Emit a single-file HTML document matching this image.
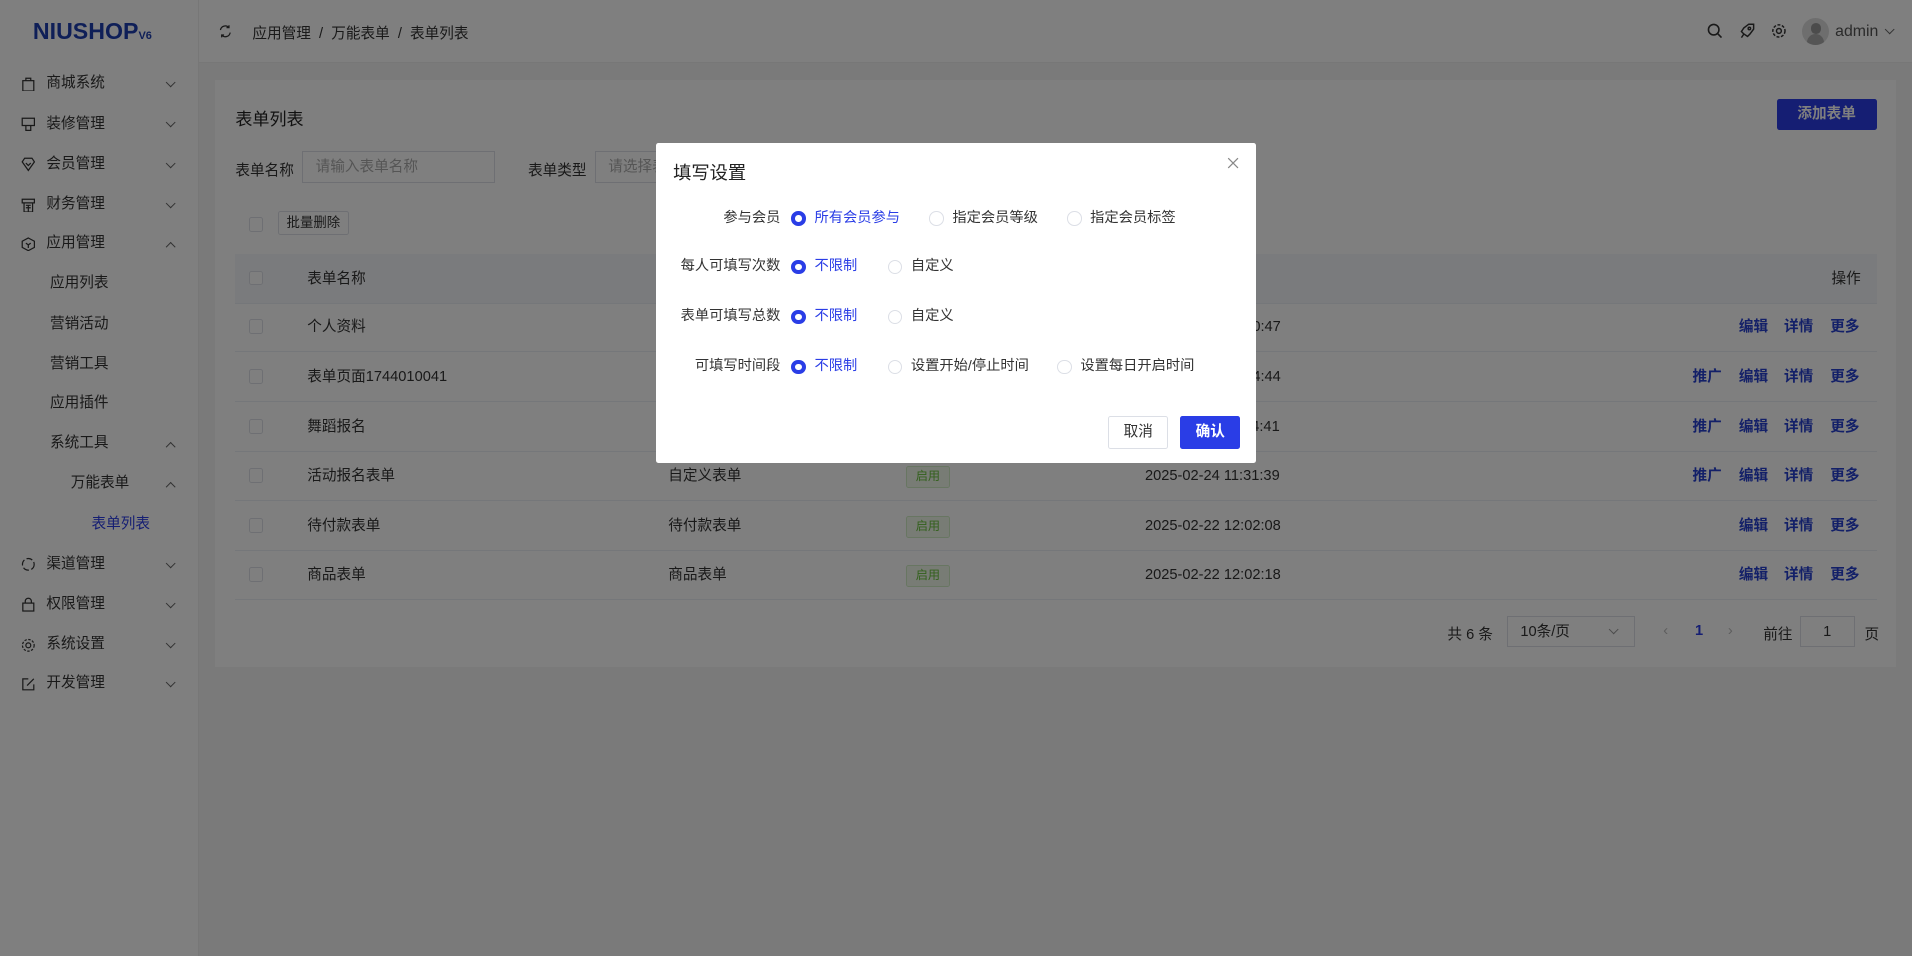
<!DOCTYPE html>
<html><head><meta charset="utf-8">
<style>
html{zoom:1.21939}
*{box-sizing:border-box;margin:0;padding:0}
i{font-style:normal}
body{width:1568px;height:784px;overflow:hidden;position:relative;background:#f5f5f5;font-family:"Liberation Sans","Noto Sans CJK SC",sans-serif;font-size:12px;color:#333}
.abs{position:absolute}
.side{left:0;top:0;width:163px;height:784px;background:#fff;border-right:1px solid #eee}
.logo{left:27px;top:15px;font-weight:bold;font-size:19px;color:#1e3fb0;letter-spacing:0px}
.logo small{font-size:9px}
.mi{position:absolute;left:0;width:163px;height:33px;line-height:33px;font-size:12px;color:#333}
.mi .t{position:absolute;left:38px}
.mi svg.ic{position:absolute;left:17px;top:11px}
.mi .ch{position:absolute;left:137px;top:13px;width:6px;height:6px;border-right:1px solid #666;border-bottom:1px solid #666;transform:rotate(45deg)}
.mi .ch.up{transform:rotate(225deg);top:16px}
.head{left:163px;top:0;width:1405px;height:52px;background:#fff;border-bottom:1px solid #eee}
.card{left:176px;top:66px;width:1379px;height:481px;background:#fff}
.ipt{border:1px solid #dcdfe6;height:26px;line-height:26px;padding-left:10px;color:#aaa;background:#fff}
.cb{width:12px;height:12px;border:1px solid #dcdfe6;background:#fff;border-radius:2px}
.row{position:absolute;left:193px;width:1346px;height:41px;border-bottom:1px solid #ebeef5;line-height:41px}
.row span{position:absolute}
.tag{position:absolute;left:550px;top:12px;width:36px;height:18px;line-height:16px;font-size:10px;text-align:center;border:1px solid #d1edc4;background:#f0f9eb;color:#67c23a;border-radius:2px}
.op{color:#2740d0;font-weight:bold}
.mask{left:0;top:0;width:1568px;height:784px;background:rgba(0,0,0,.5)}
.modal{left:538px;top:117px;width:492px;height:263px;background:#fff;border-radius:2px}
.lbl{position:absolute;width:102px;text-align:right;left:0}
.rd{position:absolute;width:12px;height:12px;border-radius:50%;border:1px solid #dcdfe6}
.rd.on{border:4px solid #2a3de6;background:#fff}
.mr{position:absolute;left:0;width:492px;height:16px;line-height:16px;font-size:11.7px}
.mr span{position:absolute}
.blue{color:#2a3de6}
</style></head><body>
<div class="abs side">
<div class="abs logo">NIUSHOP<small>V6</small></div>
<div class="mi" style="top:52px"><svg class="ic" width="12" height="12" viewBox="0 0 12 12" fill="none" stroke="#333"><rect x="1.5" y="3" width="9" height="8.5"/><path d="M4 3V1h4v2"/></svg><span class="t">商城系统</span><i class="ch"></i></div>
<div class="mi" style="top:85px"><svg class="ic" width="12" height="12" viewBox="0 0 12 12" fill="none" stroke="#333"><path d="M1 1h10v6H1zM4 7v4h4V7"/></svg><span class="t">装修管理</span><i class="ch"></i></div>
<div class="mi" style="top:118px"><svg class="ic" width="12" height="12" viewBox="0 0 12 12" fill="none" stroke="#333"><path d="M1 4l5 7 5-7-2-3H3z M4 5l2 2 2-2"/></svg><span class="t">会员管理</span><i class="ch"></i></div>
<div class="mi" style="top:151px"><svg class="ic" width="12" height="12" viewBox="0 0 12 12" fill="none" stroke="#333"><path d="M1 1h10v3H1zM2.5 4v7.5h7V4M4 6h4M4 8h4M6 6v5"/></svg><span class="t">财务管理</span><i class="ch"></i></div>
<div class="mi" style="top:183px"><svg class="ic" width="12" height="12" viewBox="0 0 12 12" fill="none" stroke="#333"><path d="M6 .8l5 2.7v5L6 11.2 1 8.5v-5zM4 5l2 1.5L8 5M6 6.5V9"/></svg><span class="t">应用管理</span><i class="ch up"></i></div>
<div class="mi" style="top:216px"><span class="t" style="left:41px">应用列表</span></div>
<div class="mi" style="top:249px"><span class="t" style="left:41px">营销活动</span></div>
<div class="mi" style="top:282px"><span class="t" style="left:41px">营销工具</span></div>
<div class="mi" style="top:314px"><span class="t" style="left:41px">应用插件</span></div>
<div class="mi" style="top:347px"><span class="t" style="left:41px">系统工具</span><i class="ch up"></i></div>
<div class="mi" style="top:380px"><span class="t" style="left:58px">万能表单</span><i class="ch up"></i></div>
<div class="mi" style="top:413px"><span class="t" style="left:75px;color:#2a3de6">表单列表</span></div>
<div class="mi" style="top:446px"><svg class="ic" width="12" height="12" viewBox="0 0 12 12" fill="none" stroke="#333"><circle cx="6" cy="6" r="4.8" stroke-dasharray="5 2"/></svg><span class="t">渠道管理</span><i class="ch"></i></div>
<div class="mi" style="top:479px"><svg class="ic" width="12" height="12" viewBox="0 0 12 12" fill="none" stroke="#333"><rect x="1.5" y="5" width="9" height="6.5"/><path d="M3.5 5V3.5a2.5 2.5 0 015 0V5"/></svg><span class="t">权限管理</span><i class="ch"></i></div>
<div class="mi" style="top:512px"><svg class="ic" width="12" height="12" viewBox="0 0 12 12" fill="none" stroke="#333"><circle cx="6" cy="6" r="2"/><circle cx="6" cy="6" r="4.8" stroke-dasharray="2 1.2"/></svg><span class="t">系统设置</span><i class="ch"></i></div>
<div class="mi" style="top:544px"><svg class="ic" width="12" height="12" viewBox="0 0 12 12" fill="none" stroke="#333"><path d="M6 1.5H1.5v9h9V6M5 7l5.5-5.5"/></svg><span class="t">开发管理</span><i class="ch"></i></div>
</div>
<div class="abs head">
<svg class="abs" style="left:16px;top:20px" width="12" height="12" viewBox="0 0 12 12" fill="none" stroke="#333"><path d="M2 5a4 4 0 017-2M10 7a4 4 0 01-7 2M9 1v2H7M3 11V9h2"/></svg>
<span class="abs" style="left:44px;top:18px">应用管理 &nbsp;/&nbsp; 万能表单 &nbsp;/&nbsp; 表单列表</span>
<svg class="abs" style="left:1237px;top:19px" width="13" height="13" viewBox="0 0 13 13" fill="none" stroke="#333" stroke-width="1.3"><circle cx="5.5" cy="5.5" r="4.3"/><path d="M8.7 8.7l3.2 3.2"/></svg>
<svg class="abs" style="left:1263px;top:19px" width="13" height="13" viewBox="0 0 13 13" fill="none" stroke="#333" stroke-width="1.2"><path d="M4 9l-2-2 2-3 4-3h4v4l-3 4-2 2zM4 9l-2 3"/><circle cx="8.5" cy="4.5" r="1"/></svg>
<svg class="abs" style="left:1289px;top:19px" width="13" height="13" viewBox="0 0 13 13" fill="none" stroke="#333" stroke-width="1.2"><circle cx="6.5" cy="6.5" r="2"/><circle cx="6.5" cy="6.5" r="5" stroke-dasharray="2.4 1.3"/></svg>
<div class="abs" style="left:1315px;top:15px;width:22px;height:22px;border-radius:50%;background:#ddd;overflow:hidden"><div class="abs" style="left:7px;top:4px;width:8px;height:9px;border-radius:4px;background:#999"></div><div class="abs" style="left:4px;top:13px;width:14px;height:9px;border-radius:7px 7px 0 0;background:#aaa"></div></div>
<span class="abs" style="left:1342px;top:19px;font-size:13px;color:#555">admin</span>
<i class="abs" style="left:1384px;top:21px;width:6px;height:6px;border-right:1px solid #666;border-bottom:1px solid #666;transform:rotate(45deg)"></i>
</div>
<div class="abs card">
<span class="abs" style="left:17px;top:20px;font-size:14px;color:#222">表单列表</span>
<div class="abs" style="left:1281px;top:15px;width:82px;height:26px;background:#2a3de6;color:#fff;text-align:center;line-height:26px;font-size:12px;font-weight:bold;border-radius:2px">添加表单</div>
<span class="abs" style="left:17px;top:64px">表单名称</span>
<div class="abs ipt" style="left:72px;top:58px;width:158px">请输入表单名称</div>
<span class="abs" style="left:257px;top:64px">表单类型</span>
<div class="abs ipt" style="left:312px;top:58px;width:160px">请选择表单类型</div>
<div class="abs cb" style="left:28px;top:112px"></div>
<div class="abs" style="left:52px;top:107px;width:58px;height:20px;border:1px solid #dcdfe6;font-size:11px;text-align:center;line-height:18px;border-radius:2px">批量删除</div>
</div>
<div class="row" style="top:208px;background:#f5f7fa;color:#333"><div class="abs cb" style="left:11px;top:14px"></div><span style="left:59px">表单名称</span><span style="left:355px">表单类型</span><span style="left:550px">状态</span><span style="left:746px">创建时间</span><span style="right:13px">操作</span></div>
<div class="row" style="top:248px"><div class="abs cb" style="left:11px;top:14px"></div><span style="left:59px">个人资料</span><span style="left:355px">个人资料</span><i class="tag">启用</i><span style="left:746px">2025-04-07 15:20:47</span><span style="left:1233px" class="op">编辑</span><span style="left:1270px" class="op">详情</span><span style="left:1308px" class="op">更多</span></div>
<div class="row" style="top:289px"><div class="abs cb" style="left:11px;top:14px"></div><span style="left:59px">表单页面1744010041</span><span style="left:355px">自定义表单</span><i class="tag">启用</i><span style="left:746px">2025-04-07 15:14:44</span><span style="left:1195px" class="op">推广</span><span style="left:1233px" class="op">编辑</span><span style="left:1270px" class="op">详情</span><span style="left:1308px" class="op">更多</span></div>
<div class="row" style="top:330px"><div class="abs cb" style="left:11px;top:14px"></div><span style="left:59px">舞蹈报名</span><span style="left:355px">自定义表单</span><i class="tag">启用</i><span style="left:746px">2025-02-24 11:34:41</span><span style="left:1195px" class="op">推广</span><span style="left:1233px" class="op">编辑</span><span style="left:1270px" class="op">详情</span><span style="left:1308px" class="op">更多</span></div>
<div class="row" style="top:370px"><div class="abs cb" style="left:11px;top:14px"></div><span style="left:59px">活动报名表单</span><span style="left:355px">自定义表单</span><i class="tag">启用</i><span style="left:746px">2025-02-24 11:31:39</span><span style="left:1195px" class="op">推广</span><span style="left:1233px" class="op">编辑</span><span style="left:1270px" class="op">详情</span><span style="left:1308px" class="op">更多</span></div>
<div class="row" style="top:411px"><div class="abs cb" style="left:11px;top:14px"></div><span style="left:59px">待付款表单</span><span style="left:355px">待付款表单</span><i class="tag">启用</i><span style="left:746px">2025-02-22 12:02:08</span><span style="left:1233px" class="op">编辑</span><span style="left:1270px" class="op">详情</span><span style="left:1308px" class="op">更多</span></div>
<div class="row" style="top:451px"><div class="abs cb" style="left:11px;top:14px"></div><span style="left:59px">商品表单</span><span style="left:355px">商品表单</span><i class="tag">启用</i><span style="left:746px">2025-02-22 12:02:18</span><span style="left:1233px" class="op">编辑</span><span style="left:1270px" class="op">详情</span><span style="left:1308px" class="op">更多</span></div>
<span class="abs" style="left:1187px;top:511px">共 6 条</span>
<div class="abs ipt" style="left:1236px;top:505px;width:105px;color:#333">10条/页</div>
<i class="abs" style="left:1320px;top:513px;width:6px;height:6px;border-right:1px solid #999;border-bottom:1px solid #999;transform:rotate(45deg)"></i>
<span class="abs" style="left:1364px;top:511px;color:#bbb">‹</span>
<span class="abs" style="left:1390px;top:511px;color:#2a3de6;font-weight:bold">1</span>
<span class="abs" style="left:1417px;top:511px;color:#bbb">›</span>
<span class="abs" style="left:1446px;top:511px">前往</span>
<div class="abs ipt" style="left:1476px;top:505px;width:45px;color:#333;text-align:center;padding:0">1</div>
<span class="abs" style="left:1529px;top:511px">页</span>
<div class="abs mask"></div>
<div class="abs modal">
<span class="abs" style="left:14px;top:13px;font-size:15px;color:#222">填写设置</span>
<svg class="abs" style="left:468px;top:12px" width="10" height="10" viewBox="0 0 10 10" stroke="#888" stroke-width="1"><path d="M1 1l8 8M9 1L1 9"/></svg>
<div class="mr" style="top:54px"><span class="lbl">参与会员</span><i class="rd on" style="left:111px;top:2px"></i><span class="blue" style="left:130px">所有会员参与</span><i class="rd" style="left:224px;top:2px"></i><span style="left:243px">指定会员等级</span><i class="rd" style="left:337px;top:2px"></i><span style="left:356px">指定会员标签</span></div>
<div class="mr" style="top:94px"><span class="lbl">每人可填写次数</span><i class="rd on" style="left:111px;top:2px"></i><span class="blue" style="left:130px">不限制</span><i class="rd" style="left:190px;top:2px"></i><span style="left:209px">自定义</span></div>
<div class="mr" style="top:135px"><span class="lbl">表单可填写总数</span><i class="rd on" style="left:111px;top:2px"></i><span class="blue" style="left:130px">不限制</span><i class="rd" style="left:190px;top:2px"></i><span style="left:209px">自定义</span></div>
<div class="mr" style="top:176px"><span class="lbl">可填写时间段</span><i class="rd on" style="left:111px;top:2px"></i><span class="blue" style="left:130px">不限制</span><i class="rd" style="left:190px;top:2px"></i><span style="left:209px">设置开始/停止时间</span><i class="rd" style="left:329px;top:2px"></i><span style="left:348px">设置每日开启时间</span></div>
<div class="abs" style="left:371px;top:224px;width:49px;height:27px;border:1px solid #dcdfe6;text-align:center;line-height:25px;border-radius:2px">取消</div>
<div class="abs" style="left:430px;top:224px;width:49px;height:27px;background:#2a3de6;color:#fff;text-align:center;line-height:27px;font-weight:bold;border-radius:2px">确认</div>
</div>
</body></html>
